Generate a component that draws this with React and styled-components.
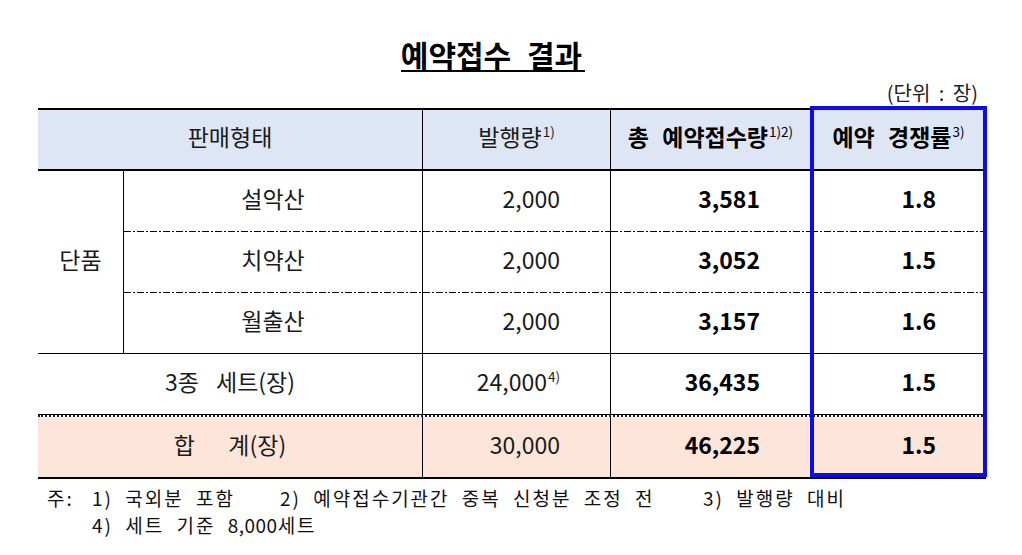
import React from 'react';
import styled, { createGlobalStyle } from 'styled-components';

const GlobalStyle = createGlobalStyle`
  body {
    margin: 0;
    background: #fff;
    font-family: "Noto Sans CJK KR", "Noto Sans", sans-serif;
    color: #111;
  }
`

const Page = styled.div`
  width: 948px;
  padding: 38px 36px 0 38px;
`

const TitleRow = styled.div`
  display: flex;
  justify-content: center;
  padding-right: 38px;
`

const Title = styled.h1`
  margin: 0;
  font-size: 30px;
  font-weight: 700;
  line-height: 32px;
  word-spacing: 9px;
  color: #000;
  padding-right: 3px;
  border-bottom: 2px solid #000;
`

const Unit = styled.div`
  margin-top: 9px;
  padding-right: 8px;
  text-align: right;
  font-size: 20px;
  line-height: 24px;
  color: #222;
  word-spacing: 4px;
`

const TableWrap = styled.div`
  position: relative;
  margin-top: 3px;
`

const Grid = styled.div`
  display: grid;
  grid-template-columns: 86px 299px 188px 200px 175px;
  grid-template-rows: 61px 61px 61px 61px 60px 3px 60px;
  border-top: 2px solid #000;
  border-bottom: 2px solid #000;
`

const Cell = styled.div`
  box-sizing: border-box;
  display: flex;
  align-items: center;
  justify-content: ${p => (p.$align === 'right' ? 'flex-end' : 'center')};
  padding-right: ${p => (p.$align === 'right' ? '50px' : '0')};
  padding-bottom: 7px;
  grid-column: ${p => p.$span || 'auto'};
  grid-row: ${p => p.$rows || 'auto'};
  font-size: 23px;
  font-weight: ${p => (p.$bold ? 700 : 400)};
  color: ${p => (p.$bold ? '#000' : '#1a1a1a')};
  background-color: ${p => (p.$head ? '#dee6f6' : p.$total ? '#fde6d9' : '#fff')};
  border-right: ${p => (p.$last ? 'none' : '1px solid #000')};
  border-bottom: ${p =>
    p.$line === 'thick' ? '2px solid #000' : p.$line === 'solid' ? '1px solid #000' : 'none'};
  background-image: ${p =>
    p.$line === 'dash'
      ? 'repeating-linear-gradient(90deg, #000 0 7px, transparent 7px 9px, #000 9px 11px, transparent 11px 13px)'
      : 'none'};
  background-size: 100% 1px;
  background-position: bottom left;
  background-repeat: no-repeat;
`

const Label = styled.span`
  white-space: pre;
  word-spacing: ${p => p.$ws || '0'};
`

const Sup = styled.sup`
  font-size: 13.5px;
  font-weight: 400;
  line-height: 0;
  vertical-align: 9px;
  margin-left: 1px;
  word-spacing: 0;
`

const DoubleRule = styled.div`
  grid-column: 1 / -1;
  box-sizing: border-box;
  border-top: 1px solid #000;
  border-bottom: 2px dotted #222;
`

const Highlight = styled.div`
  position: absolute;
  left: 772px;
  top: -2px;
  width: 177px;
  height: 371px;
  box-sizing: border-box;
  border: 4px solid #0a0af5;
  pointer-events: none;
`

const Notes = styled.div`
  margin-top: 5px;
  padding-left: 9px;
  font-size: 19px;
  line-height: 27px;
  color: #111;
  display: grid;
  grid-template-columns: 45px auto;
  letter-spacing: 2px;
`

const NoteLine = styled.div`
  display: flex;
  grid-column: 2;
`

const Note = styled.span`
  width: ${p => p.$w || 'auto'};
  word-spacing: 6px;
  white-space: pre;
`

const Num = styled.span`
  letter-spacing: 0.5px;
`

const TableCell = ({ children, ws, ...rest }) => (
  <Cell {...rest}>
    <Label $ws={ws}>{children}</Label>
  </Cell>
)

const subRows = [
  { name: '설악산', issued: '2,000', booked: '3,581', rate: '1.8', line: 'dash' },
  { name: '치약산', issued: '2,000', booked: '3,052', rate: '1.5', line: 'dash' },
  { name: '월출산', issued: '2,000', booked: '3,157', rate: '1.6', line: 'solid' },
]

export default function App() {
  return (
    <Page>
      <GlobalStyle />
      <TitleRow>
        <Title>예약접수 결과</Title>
      </TitleRow>
      <Unit>(단위 : 장)</Unit>

      <TableWrap>
        <Grid>
          <TableCell $head $span="1 / 3" $line="thick">판매형태</TableCell>
          <TableCell $head $line="thick">발행량<Sup>1)</Sup></TableCell>
          <TableCell $head $bold $line="thick" ws="8px">총 예약접수량<Sup>1)2)</Sup></TableCell>
          <TableCell $head $bold $last $line="thick" ws="8px">예약 경쟁률<Sup>3)</Sup></TableCell>

          <TableCell $rows="2 / 5" $line="solid">단품</TableCell>
          {subRows.map(r => (
            <React.Fragment key={r.name}>
              <TableCell $line={r.line}>{r.name}</TableCell>
              <TableCell $line={r.line} $align="right">{r.issued}</TableCell>
              <TableCell $line={r.line} $align="right" $bold>{r.booked}</TableCell>
              <TableCell $line={r.line} $align="right" $bold $last>{r.rate}</TableCell>
            </React.Fragment>
          ))}

          <TableCell $span="1 / 3" ws="12px">3종 세트(장)</TableCell>
          <TableCell $align="right">24,000<Sup>4)</Sup></TableCell>
          <TableCell $align="right" $bold>36,435</TableCell>
          <TableCell $align="right" $bold $last>1.5</TableCell>

          <DoubleRule />

          <TableCell $total $span="1 / 3" ws="6px">{'합   계(장)'}</TableCell>
          <TableCell $total $align="right">30,000</TableCell>
          <TableCell $total $align="right" $bold>46,225</TableCell>
          <TableCell $total $align="right" $bold $last>1.5</TableCell>
        </Grid>
        <Highlight />
      </TableWrap>

      <Notes>
        <span>주:</span>
        <NoteLine>
          <Note $w="188px">1) 국외분 포함</Note>
          <Note $w="423px">2) 예약접수기관간 중복 신청분 조정 전</Note>
          <Note>3) 발행량 대비</Note>
        </NoteLine>
        <NoteLine>
          <Note>4) 세트 기준 <Num>8,000</Num>세트</Note>
        </NoteLine>
      </Notes>
    </Page>
  );
}
